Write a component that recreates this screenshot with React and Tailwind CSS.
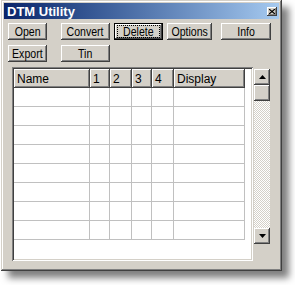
import React from "react";

const raised =
  "shadow-[inset_-1px_-1px_#404040,inset_1px_1px_#ffffff,inset_-2px_-2px_#808080,inset_2px_2px_#d4d0c8]";

function Btn({ children, w, focus }) {
  return (
    <div
      className={`h-[17px] flex items-center justify-center bg-[#d4d0c8] text-[12px] leading-none text-black ${
        focus
          ? "shadow-[inset_0_0_0_1px_#000,inset_-2px_-2px_#404040,inset_2px_2px_#ffffff,inset_-3px_-3px_#808080]"
          : raised
      }`}
      style={{ width: w }}
    >
      {focus ? (
        <span className="flex-1 mx-[4px] h-[11px] flex items-center justify-center outline outline-1 outline-dotted outline-black">
          <span className="inline-block scale-x-[0.88]">{children}</span>
        </span>
      ) : (
        <span className="inline-block scale-x-[0.88]">{children}</span>
      )}
    </div>
  );
}

const cols = [
  { name: "Name", w: 76 },
  { name: "1", w: 20 },
  { name: "2", w: 22 },
  { name: "3", w: 20 },
  { name: "4", w: 22 },
  { name: "Display", w: 71 },
];

export default function App() {
  return (
    <div className="w-[295px] h-[285px] bg-white font-['Liberation_Sans',Arial,sans-serif] overflow-hidden">
      <div className="ml-[1px] w-[281px] h-[271px] bg-[#d4d0c8] p-[3px] flex flex-col shadow-[inset_-1px_-1px_#404040,inset_1px_1px_#d4d0c8,inset_-2px_-2px_#808080,inset_2px_2px_#ffffff,7px_7px_7px_rgba(0,0,0,0.5)]">
        {/* title bar */}
        <div className="h-[16px] bg-gradient-to-r from-[#0a246a] to-[#a6caf0] flex items-center justify-between pl-[3px] pr-[2px]">
          <span className="text-white font-bold text-[13px] leading-none">DTM Utility</span>
          <div className={`w-[10px] h-[9px] bg-[#d4d0c8] flex items-center justify-center ${raised}`}>
            <svg width="6" height="5" viewBox="0 0 6 5">
              <path d="M0 0L6 5M6 0L0 5" stroke="#000" strokeWidth="1.2" />
            </svg>
          </div>
        </div>
        {/* buttons */}
        <div className="mt-[4px] ml-[4px] flex">
          <Btn w={39}>Open</Btn>
          <div className="w-[14px]" />
          <Btn w={49}>Convert</Btn>
          <div className="w-[4px]" />
          <Btn w={49} focus>
            Delete
          </Btn>
          <div className="w-[4px]" />
          <Btn w={45}>Options</Btn>
          <div className="w-[9px]" />
          <Btn w={50}>Info</Btn>
        </div>
        <div className="mt-[5px] ml-[4px] flex">
          <Btn w={39}>Export</Btn>
          <div className="w-[14px]" />
          <Btn w={49}>Tin</Btn>
        </div>
        {/* list + scrollbar */}
        <div className="mt-[5px] ml-[8px] flex items-start">
          <div className="w-[241px] h-[194px] bg-white p-[2px] shadow-[inset_1px_1px_#808080,inset_-1px_-1px_#ffffff,inset_2px_2px_#404040,inset_-2px_-2px_#d4d0c8]">
            <div className="flex">
              {cols.map((c) => (
                <div
                  key={c.name}
                  className={`h-[19px] flex items-center pl-[3px] text-[12px] leading-none bg-[#d4d0c8] ${raised}`}
                  style={{ width: c.w }}
                >
                  {c.name}
                </div>
              ))}
            </div>
            {Array.from({ length: 8 }).map((_, r) => (
              <div key={r} className="flex">
                {cols.map((c) => (
                  <div
                    key={c.name}
                    className="h-[19px] border-r border-b border-[#c0c0c0]"
                    style={{ width: c.w }}
                  />
                ))}
              </div>
            ))}
          </div>
          <div className="ml-[1px] mt-[2px] w-[16px] h-[175px] flex flex-col bg-[repeating-conic-gradient(#d4d0c8_0%_25%,#ffffff_0%_50%)] bg-[length:2px_2px]">
            <div className={`h-[16px] bg-[#d4d0c8] flex items-center justify-center ${raised}`}>
              <svg width="7" height="4" viewBox="0 0 7 4">
                <path d="M3.5 0L7 4H0Z" fill="#000" />
              </svg>
            </div>
            <div className={`h-[16px] bg-[#d4d0c8] ${raised}`} />
            <div className="flex-1" />
            <div className={`h-[16px] bg-[#d4d0c8] flex items-center justify-center ${raised}`}>
              <svg width="7" height="4" viewBox="0 0 7 4">
                <path d="M0 0H7L3.5 4Z" fill="#000" />
              </svg>
            </div>
          </div>
        </div>
      </div>
    </div>
  );
}
